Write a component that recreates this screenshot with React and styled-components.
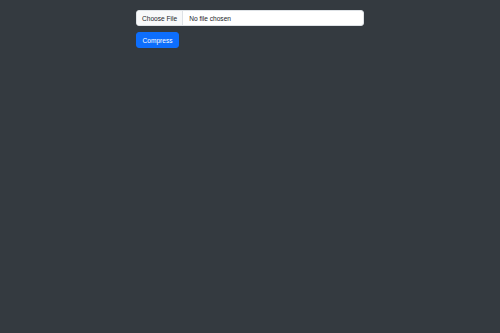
import React from "react";
import styled, { createGlobalStyle } from "styled-components";

const Global = createGlobalStyle`
  html, body { margin: 0; padding: 0; background: #343a40; }
  body { font-family: "Liberation Sans", Arial, sans-serif; min-height: 333px; }
`;

const Container = styled.div`
  width: 228px;
  margin: 0 auto;
  padding-top: 10px;
  display: flex;
  flex-direction: column;
  align-items: flex-start;
  gap: 6px;
`;

const FileInput = styled.input`
  box-sizing: border-box;
  width: 228px;
  height: 16px;
  margin: 0;
  padding: 0;
  border: 1px solid #dee2e6;
  border-radius: 3px;
  background: #fff;
  color: #212529;
  font-family: "Liberation Sans", Arial, sans-serif;
  font-size: 6.6px;
  line-height: 14px;
  overflow: hidden;

  &::file-selector-button {
    height: 14px;
    margin: 0 6px 0 0;
    padding: 0 5px;
    border: 0;
    border-right: 1px solid #dee2e6;
    border-radius: 0;
    background: #f8f9fa;
    color: #212529;
    font-family: "Liberation Sans", Arial, sans-serif;
    font-size: 6.6px;
  }
`;

const Button = styled.button`
  box-sizing: border-box;
  height: 16px;
  padding: 0 5.5px;
  border: 1px solid #0d6efd;
  border-radius: 3px;
  background: #0d6efd;
  color: #fff;
  font-family: "Liberation Sans", Arial, sans-serif;
  font-size: 6.6px;
  cursor: pointer;
`;

export default function App() {
  return (
    <>
      <Global />
      <Container>
        <FileInput type="file" />
        <Button>Compress</Button>
      </Container>
    </>
  );
}
